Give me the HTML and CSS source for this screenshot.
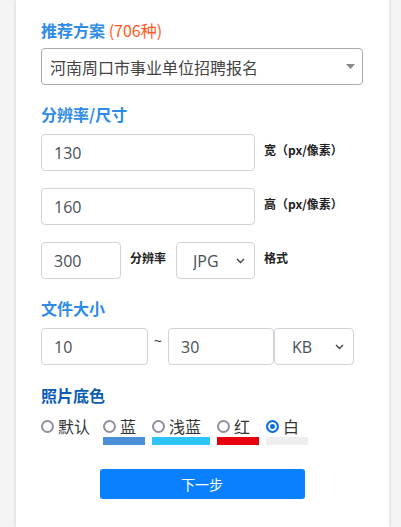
FILE: index.html
```html
<!DOCTYPE html>
<html lang="zh">
<head>
  <meta charset="UTF-8">
  <title>证件照规格</title>
  <link rel="stylesheet" href="styles.css">
</head>
<body>

  <!-- === Spec form card === -->
  <div class="card">

    <!-- Recommended presets -->
    <div class="title">推荐方案 <span class="count">(706种)</span></div>
    <div class="select-wrap preset">
      <select class="preset-select">
        <option>河南周口市事业单位招聘报名</option>
      </select>
      <svg class="tri" width="9" height="5" viewBox="0 0 9 5"><path d="M0 0h9L4.5 5z" fill="#888"/></svg>
    </div>

    <!-- Size in pixels -->
    <div class="title">分辨率/尺寸</div>
    <div class="row">
      <input class="field wide" type="text" value="130">
      <span class="tag">宽（px/像素）</span>
    </div>
    <div class="row">
      <input class="field wide" type="text" value="160">
      <span class="tag">高（px/像素）</span>
    </div>
    <div class="row">
      <input class="field dpi" type="text" value="300">
      <span class="tag">分辨率</span>
      <div class="select-wrap small">
        <select class="field sel">
          <option>JPG</option>
        </select>
        <svg class="chev" width="9" height="6" viewBox="0 0 9 6"><path d="M1 1l3.5 3.5L8 1" fill="none" stroke="#444" stroke-width="1.4"/></svg>
      </div>
      <span class="tag">格式</span>
    </div>

    <!-- File size range -->
    <div class="title">文件大小</div>
    <div class="row tight">
      <input class="field kb-min" type="text" value="10">
      <span class="tilde">~</span>
      <input class="field kb-max" type="text" value="30">
      <div class="select-wrap small">
        <select class="field sel unit">
          <option>KB</option>
        </select>
        <svg class="chev" width="9" height="6" viewBox="0 0 9 6"><path d="M1 1l3.5 3.5L8 1" fill="none" stroke="#444" stroke-width="1.4"/></svg>
      </div>
    </div>

    <!-- Background colour -->
    <div class="title dark">照片底色</div>
    <div class="colors">
      <label class="opt"><span class="opt-line"><input type="radio" name="bg">默认</span></label>
      <label class="opt"><span class="opt-line"><input type="radio" name="bg">蓝</span><span class="bar blue"></span></label>
      <label class="opt"><span class="opt-line"><input type="radio" name="bg">浅蓝</span><span class="bar light"></span></label>
      <label class="opt"><span class="opt-line"><input type="radio" name="bg">红</span><span class="bar red"></span></label>
      <label class="opt"><span class="opt-line"><input type="radio" name="bg" checked>白</span><span class="bar white"></span></label>
    </div>

    <div class="actions">
      <button class="next-btn">下一步</button>
    </div>
  </div>

</body>
</html>
```

FILE: styles.css
```css
/* Base styling */
body {
  margin: 0;
  background-color: #f4f4f4;
  font-family: 'Open Sans', 'Noto Sans CJK SC', sans-serif;
  color: #333;
}

/* White card */
.card {
  box-sizing: border-box;
  margin: 0 12px 0 16px;
  padding: 18px 26px 20px 25px;
  min-height: 100vh;
  background-color: white;
  box-shadow: 0 0 4px rgba(0,0,0,0.15);
}

/* Section titles */
.title {
  font-family: 'Noto Sans CJK SC', sans-serif;
  font-size: 16px;
  line-height: 24px;
  font-weight: bold;
  color: #2e8be6;
  margin: 17px 0 8px;
}

.title:first-child {
  margin-top: 0;
  margin-bottom: 6px;
}

.title.dark {
  color: #0b5cb5;
  margin-top: 18px;
}

.count {
  font-weight: normal;
  color: #ff5a24;
}

/* Preset select */
.select-wrap {
  position: relative;
}

.preset-select {
  width: 100%;
  height: 37px;
  padding: 0 8px;
  border: 1px solid #aaa;
  border-radius: 4px;
  background-color: white;
  font-family: 'Noto Sans CJK SC', sans-serif;
  font-size: 16px;
  color: #444;
  appearance: none;
  outline: none;
}

.preset .tri {
  position: absolute;
  right: 8px;
  top: 16px;
}

.chev {
  position: absolute;
  right: 10px;
  top: 16px;
}

/* Input rows */
.row {
  display: flex;
  align-items: center;
  margin-bottom: 17px;
}

.row.tight {
  margin-bottom: 0;
}

.field {
  box-sizing: border-box;
  height: 37px;
  padding: 0 12px;
  border: 1px solid #ced4da;
  border-radius: 4px;
  background-color: white;
  font-family: 'Open Sans', 'Noto Sans CJK SC', sans-serif;
  font-size: 16px;
  color: #495057;
  outline: none;
}

.wide {
  width: 214px;
}

.dpi {
  width: 80px;
}

.sel {
  width: 79px;
  padding-left: 16px;
  appearance: none;
}

.sel.unit {
  width: 80px;
  padding-left: 17px;
}

.tag {
  margin: 0 10px 6px 9px;
  font-family: 'Noto Sans CJK SC', sans-serif;
  font-size: 12px;
  font-weight: bold;
  color: #222;
  white-space: nowrap;
}

.kb-min {
  width: 107px;
}

.kb-max {
  width: 106px;
}

.tilde {
  width: 20px;
  padding-left: 6px;
  box-sizing: border-box;
  margin-bottom: 12px;
  font-size: 14px;
  color: #333;
}

/* Background colour options */
.colors {
  display: flex;
  gap: 7px;
  margin-top: 6px;
}

.opt {
  display: flex;
  flex-direction: column;
}

.opt-line {
  display: flex;
  align-items: center;
  padding-right: 9px;
  font-family: 'Noto Sans CJK SC', sans-serif;
  font-size: 16px;
  line-height: 22px;
  color: #333;
}

.opt:first-child .opt-line {
  padding-right: 6px;
}

/* Hand-drawn radio ring */
.opt input {
  appearance: none;
  box-sizing: border-box;
  width: 13px;
  height: 13px;
  margin: 0 4px 0 0;
  border: 2px solid #8f8f9d;
  border-radius: 50%;
  background-color: white;
}

.opt input:checked {
  border-color: #0b6fe3;
  background-color: #0b6fe3;
  box-shadow: inset 0 0 0 2px white;
}

.bar {
  height: 8px;
}

.bar.blue { background-color: #4a90d9; }
.bar.light { background-color: #2fc5fb; }
.bar.red { background-color: #e8000f; }
.bar.white { background-color: #eeeeee; }

/* Next button */
.actions {
  display: flex;
  justify-content: center;
  margin-top: 24px;
}

.next-btn {
  width: 205px;
  height: 30px;
  border: none;
  border-radius: 3px;
  background-color: #0a80ff;
  color: white;
  font-family: 'Noto Sans CJK SC', sans-serif;
  font-size: 14px;
  cursor: pointer;
}
```
